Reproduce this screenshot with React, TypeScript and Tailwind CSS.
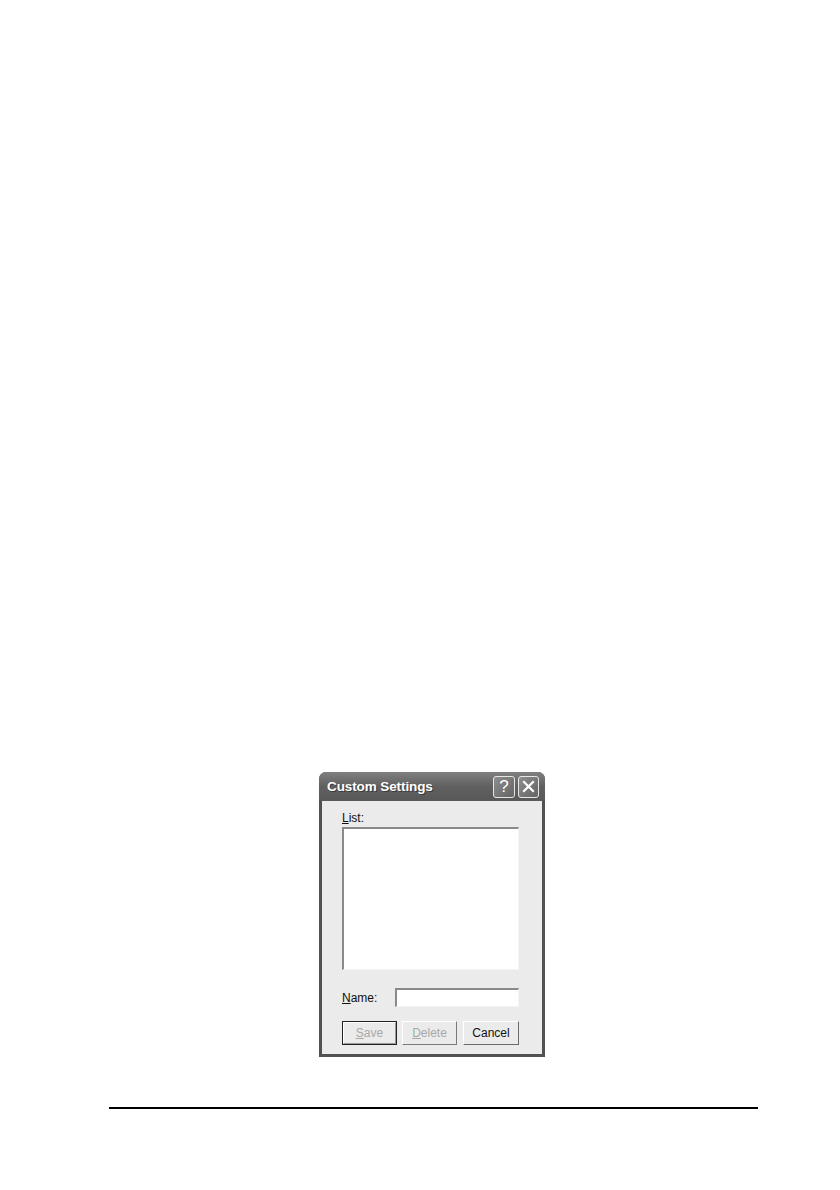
import React from "react";

export default function App() {
  return (
    <div className="w-[840px] h-[1190px] bg-white flex flex-col" style={{ fontFamily: '"Liberation Sans", Arial, sans-serif' }}>
      <div className="pt-[772px] pl-[319px]">
        <div className="w-[226px] h-[285px] flex flex-col rounded-t-[7px] overflow-hidden bg-[#515151]">
          {/* Title bar */}
          <div className="h-[29px] shrink-0 flex items-center pl-[8px] pr-[6px] bg-gradient-to-b from-[#808080] via-[#606060] to-[#585858]">
            <span className="text-white font-bold text-[13.5px] tracking-[-0.1px] flex-1 pt-[2px] [text-shadow:1px_1px_0_#3a3a3a]">Custom Settings</span>
            <div className="flex gap-[3px] items-center">
              <div className="w-[22px] h-[22px] rounded-[3px] border border-[#e6e6e6] bg-gradient-to-br from-[#8e8e8e] to-[#646464] flex items-center justify-center text-white text-[17px] leading-none">?</div>
              <div className="w-[21px] h-[22px] rounded-[3px] border border-[#e6e6e6] bg-gradient-to-br from-[#8e8e8e] to-[#646464] flex items-center justify-center">
                <svg width="13" height="13" viewBox="0 0 13 13">
                  <path d="M2 2 L11 11 M11 2 L2 11" stroke="white" strokeWidth="2.2" strokeLinecap="square" />
                </svg>
              </div>
            </div>
          </div>
          {/* Body */}
          <div className="flex-1 mx-[3px] mb-[3px] bg-[#ebebeb] flex flex-col pl-[20px] pr-[23px] text-[12px] text-[#111]">
            <div className="mt-[10px] h-[14px] leading-[14px]"><span className="underline">L</span>ist:</div>
            <div className="mt-[2px] h-[143px] bg-white border-t-[2px] border-l-[2px] border-t-[#8a8a8a] border-l-[#8a8a8a] border-r border-b border-r-[#f4f4f4] border-b-[#f4f4f4]" />
            <div className="mt-[18px] flex items-center h-[19px]">
              <div className="w-[53px]"><span className="underline">N</span>ame:</div>
              <div className="flex-1 h-[19px] bg-white border-t-[2px] border-l-[2px] border-t-[#8a8a8a] border-l-[#8a8a8a] border-r border-b border-r-[#f4f4f4] border-b-[#f4f4f4]" />
            </div>
            <div className="mt-[14px] flex gap-[5px] h-[24px]">
              <div className="w-[55px] h-[24px] border border-[#222] flex">
                <div className="flex-1 border border-t-white border-l-white border-r-[#9a9a9a] border-b-[#9a9a9a] flex items-center justify-center text-[#a8a8a8]">
                  <span><span className="underline">S</span>ave</span>
                </div>
              </div>
              <div className="w-[55px] h-[24px] border border-t-white border-l-white border-r-[#7a7a7a] border-b-[#7a7a7a] flex items-center justify-center text-[#a8a8a8]">
                <span><span className="underline">D</span>elete</span>
              </div>
              <div className="w-[56px] ml-[1px] h-[24px] border border-t-white border-l-white border-r-[#6a6a6a] border-b-[#6a6a6a] flex items-center justify-center text-[#111]">
                Cancel
              </div>
            </div>
          </div>
        </div>
      </div>
      <div className="mt-[50px] ml-[109px] w-[649px] h-[1.5px] bg-black" />
    </div>
  );
}
